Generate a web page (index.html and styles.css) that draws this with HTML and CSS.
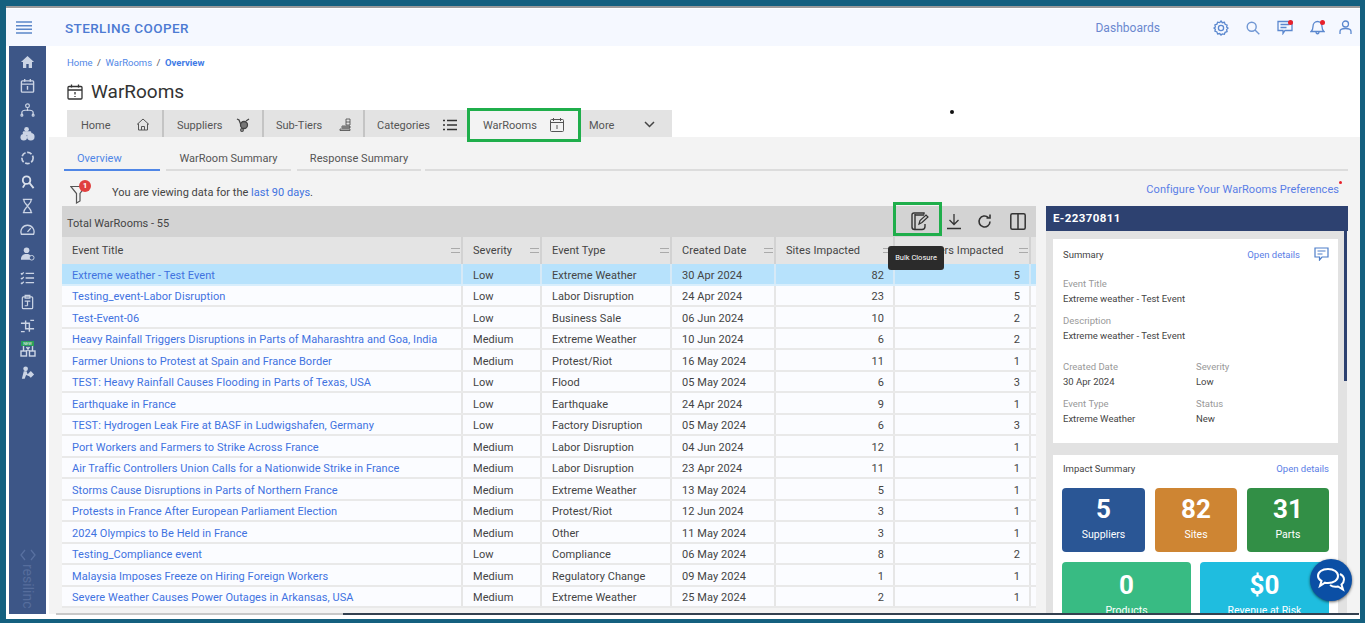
FILE: index.html
```html
<!DOCTYPE html>
<html lang="en">
<head>
<meta charset="utf-8">
<title>WarRooms</title>
<link rel="stylesheet" href="styles.css">
</head>
<body>
<div class="screen">
  <header class="topbar">
    <div class="burger"><svg width="16" height="14" viewBox="0 0 16 14"><path d="M0 1h16M0 4.700h16M0 8.300h16M0 12h16" stroke="#5b86c9" stroke-width="1.500"/></svg></div>
    <div class="brand">STERLING COOPER</div>
    <div class="topnav">
      <span class="dash">Dashboards</span>
      <span class="topicons">
        <svg width="16" height="16" viewBox="0 0 16 16" fill="none" stroke="#5b88cf" stroke-width="1.300"><path d="M8 1l1.300 1.700 2.100-.4.700 2 2 .8-.5 2 1.400 1-1.400 1.500.5 2-2 .7-.7 2-2.100-.4L8 15l-1.300-1.500-2.100.4-.7-2-2-.7.500-2L1 8l1.400-1-.5-2 2-.8.700-2 2.100.4z"/><circle cx="8" cy="8" r="2.600"/></svg>
        <svg width="14" height="14" viewBox="0 0 14 14" fill="none" stroke="#7097d4" stroke-width="1.400"><circle cx="5.700" cy="5.700" r="4.500"/><path d="M9 9l4.300 4.300"/></svg>
        <span class="dotted"><svg width="16" height="15" viewBox="0 0 16 15" fill="none" stroke="#5b88cf" stroke-width="1.300"><path d="M1 1.500h14v9H8l-2 3v-3H1zM3.500 4.500h9M3.500 7.500h6"/></svg><i class="reddot"></i></span>
        <span class="dotted"><svg width="15" height="15" viewBox="0 0 15 15" fill="none" stroke="#5b88cf" stroke-width="1.300"><path d="M1 11.500c1.500-1 2-2 2-5s2-5 4.500-5 4.500 2 4.500 5 .5 4 2 5zM6 11.500c0 3 3 3 3 0"/></svg><i class="reddot"></i></span>
        <svg class="usericon" width="13" height="15" viewBox="0 0 13 15" fill="none" stroke="#5b88cf" stroke-width="1.300"><circle cx="6.500" cy="4" r="3"/><path d="M1 14v-2.500C1 9.500 3 8.500 6.500 8.500s5.500 1 5.500 3V14"/></svg>
      </span>
    </div>
  </header>

  <div class="shell">
    <nav class="sidebar">
      <svg class="sico" viewBox="0 0 16 16"><path d="M8 1.500L1 8h2.200v6.500h3.500V10h2.600v4.500h3.500V8H15z" fill="#dfe6f2"/></svg>
      <svg class="sico" viewBox="0 0 16 16" fill="none" stroke="#dfe6f2" stroke-width="1.500"><rect x="1.500" y="2.500" width="13" height="12" rx="1"/><path d="M1.500 6h13M5 .5v3M11 .5v3M8 8v4"/></svg>
      <svg class="sico" viewBox="0 0 16 16" fill="none" stroke="#dfe6f2" stroke-width="1.300"><circle cx="8" cy="3.500" r="2"/><path d="M2 13v-2.500C2 9 4 8 8 8s6 1 6 2.500V13M8 6v3"/><circle cx="2" cy="13.500" r="1"/><circle cx="14" cy="13.500" r="1"/></svg>
      <svg class="sico" viewBox="0 0 16 16" fill="#dfe6f2"><circle cx="7" cy="3" r="2.500"/><rect x="3" y="5" width="9" height="4" rx="1"/><circle cx="4" cy="11.500" r="3.500"/><circle cx="11.500" cy="11" r="4"/></svg>
      <svg class="sico" viewBox="0 0 16 16" fill="none" stroke="#dfe6f2" stroke-width="1.800" stroke-dasharray="5 1.800"><circle cx="8" cy="8" r="6"/></svg>
      <svg class="sico" viewBox="0 0 16 16" fill="none" stroke="#eef2f8" stroke-width="2"><circle cx="7" cy="6" r="4"/><path d="M10 9l4.500 5.500M3 14l2.500-4"/></svg>
      <svg class="sico" viewBox="0 0 16 16" fill="none" stroke="#dfe6f2" stroke-width="1.400"><path d="M3 1h10M3 15h10M4 1c0 4 3 5 4 7 1-2 4-3 4-7M4 15c0-4 3-5 4-7 1 2 4 3 4 7z"/></svg>
      <svg class="sico" viewBox="0 0 16 16" fill="none" stroke="#dfe6f2" stroke-width="1.400"><path d="M1.500 12.500a7 7 0 1 1 13 0zM8 10l3.500-4"/></svg>
      <svg class="sico" viewBox="0 0 16 16" fill="#dfe6f2"><circle cx="7" cy="4" r="3"/><path d="M1 14c0-4 2-6 6-6 2 0 3 .5 4 1.500V14z"/><circle cx="12.500" cy="12" r="2.500" fill="#3d5687" stroke="#dfe6f2"/></svg>
      <svg class="sico" viewBox="0 0 16 16" fill="none" stroke="#dfe6f2" stroke-width="1.400"><path d="M6 3h9M6 8h9M6 13h9M1 3l1 1 2-2M1 8l1 1 2-2M1 13l1 1 2-2"/></svg>
      <svg class="sico" viewBox="0 0 16 16" fill="none" stroke="#dfe6f2" stroke-width="1.300"><rect x="2.500" y="2.500" width="11" height="12.500" rx="1"/><path d="M5.500 1h5v3h-5zM5 7h6M8 7v5M5 12h3"/></svg>
      <svg class="sico" viewBox="0 0 16 16" fill="none" stroke="#dfe6f2" stroke-width="1.500"><path d="M1 5h9v9M15 11H6V2M1 14h4M11 2h4"/></svg>
      <span class="newicon"><i class="newtag">NEW</i><svg width="16" height="11" viewBox="0 0 16 11" fill="none" stroke="#dfe6f2" stroke-width="1.400"><rect x="1" y="5" width="5.500" height="5"/><rect x="9.500" y="5" width="5.500" height="5"/><path d="M3.500 0v5M12.500 0v5M6.500 1l3 4M9.500 1l-3 4"/></svg></span>
      <svg class="sico" viewBox="0 0 16 16" fill="#dfe6f2"><circle cx="6" cy="3.500" r="2.500"/><path d="M2 14l2-8h3l1 3 2 1v1.500L6.500 10 5 14z"/><rect x="9" y="7" width="5" height="5" transform="rotate(45 11.500 9.500)"/></svg>
      <div class="sidelogo"><svg width="16" height="16" viewBox="0 0 16 16" fill="none" stroke="#5870a0" stroke-width="1.300"><path d="M5 3L1 8l4 5M11 3l4 5-4 5"/></svg><span>resilinc</span></div>
    </nav>

    <main class="main">
      <div class="crumbs"><a>Home</a><span>/</span><a>WarRooms</a><span>/</span><b>Overview</b></div>
      <h1 class="title">
        <svg width="16" height="16" viewBox="0 0 16 16" fill="none" stroke="#333" stroke-width="1.300"><rect x="1" y="2.500" width="14" height="12.500" rx="1"/><path d="M1 6h14M4.500 .5v3M11.500 .5v3M8 8v2.500M8 12v1"/></svg>
        WarRooms
      </h1>
      <div class="tabs">
        <div class="tab t-home"><span>Home</span><svg width="14" height="13" viewBox="0 0 14 13" fill="none" stroke="#555" stroke-width="1"><path d="M1 6.500L7 1l6 5.500M2.500 5.500V12h9V5.500M5.500 12V8.500h3V12"/></svg></div>
        <div class="tab t-sup"><span>Suppliers</span><svg width="14" height="14" viewBox="0 0 14 14" fill="none" stroke="#444" stroke-width="1.300"><path d="M1 1l2 1 2 5M13 1l-3 2"/><circle cx="8" cy="7" r="3.500" fill="#777"/><circle cx="6" cy="12" r="1.300"/></svg></div>
        <div class="tab t-sub"><span>Sub-Tiers</span><svg width="12" height="13" viewBox="0 0 12 13" fill="#444" stroke="#444" stroke-width=".8"><path d="M7 1h4v6H7zM3 8h8v2H3zM1 11h10v1.500H1z" fill="none"/><path d="M7 4h4M4 9h7"/></svg></div>
        <div class="tab t-cat"><span>Categories</span><svg width="14" height="12" viewBox="0 0 14 12" fill="none" stroke="#333" stroke-width="1.500"><path d="M4 1.500h10M4 6h10M4 10.500h10M0 1.500h2M0 6h2M0 10.500h2"/></svg></div>
        <div class="tab t-war"><span>WarRooms</span><svg width="14" height="14" viewBox="0 0 14 14" fill="none" stroke="#555" stroke-width="1"><rect x=".5" y="1.500" width="13" height="12" rx="1"/><path d="M.5 4.500h13M3.500 0v3M10.500 0v3M7 7v4"/></svg></div>
        <div class="tab t-more"><span>More</span><svg width="11" height="7" viewBox="0 0 11 7" fill="none" stroke="#444" stroke-width="1.500"><path d="M1 1l4.500 4.500L10 1"/></svg></div>
      </div>

      <section class="panel">
        <div class="subtabs">
          <div class="st st-over">Overview</div>
          <div class="st st-sum">WarRoom Summary</div>
          <div class="st st-res">Response Summary</div>
          <div class="st st-fill"></div>
        </div>
        <div class="notice">
          <span class="funnel"><svg width="16" height="19" viewBox="0 0 16 19" fill="none" stroke="#555" stroke-width="1.200"><path d="M.8 1.500h14.400L10 8.500v7.500L6.500 18V8.500z"/></svg><i class="fbadge">1</i></span>
          <span class="ntext">You are viewing data for the <a>last 90 days</a>.</span>
          <a class="config">Configure Your WarRooms Preferences<i class="reddot small"></i></a>
        </div>

        <div class="columns">
          <div class="gridwrap">
            <div class="toolbar">
              <span>Total WarRooms - 55</span>
              <div class="tools">
                <span class="bulk"><svg width="20" height="19" viewBox="0 0 20 19" fill="none" stroke="#333" stroke-width="1.400"><path d="M14 2.500V1H4A2 2 0 0 0 2 3v12a2.500 2.500 0 0 0 2.500 2.500H12a3 3 0 0 0 3-3V12"/><path d="M5 2v15M5 3h9"/><path d="M9 12l1-3.500 6-5.500 2 2-6 5.500z" stroke-width="1.200"/></svg></span>
                <svg class="tool t-dl" width="16" height="17" viewBox="0 0 16 17" fill="none" stroke="#333" stroke-width="1.300"><path d="M8 1v10.500M3.500 7L8 11.500 12.500 7M1 15.500h14"/></svg>
                <svg class="tool t-ref" width="15" height="15" viewBox="0 0 15 15" fill="none" stroke="#333" stroke-width="1.600"><path d="M13 7.500a5.500 5.500 0 1 1-1.700-4M13 .5v3.500H9.500"/></svg>
                <svg class="tool t-split" width="16" height="17" viewBox="0 0 16 17" fill="none" stroke="#333" stroke-width="1.500"><rect x=".8" y=".8" width="14.400" height="15.400" rx="1.500"/><path d="M8 1v15"/></svg>
              </div>
            </div>
            <div class="row head">
              <div class="cell">Event Title<i class="cm"></i></div>
              <div class="cell">Severity<i class="cm"></i></div>
              <div class="cell">Event Type<i class="cm"></i></div>
              <div class="cell">Created Date<i class="cm"></i></div>
              <div class="cell">Sites Impacted<i class="cm"></i></div>
              <div class="cell sup">Suppliers Impacted<i class="cm"></i></div>
            </div>
            <div class="row sel"><div class="cell link">Extreme weather - Test Event</div><div class="cell">Low</div><div class="cell">Extreme Weather</div><div class="cell">30 Apr 2024</div><div class="cell num">82</div><div class="cell num">5</div></div>
            <div class="row"><div class="cell link">Testing_event-Labor Disruption</div><div class="cell">Low</div><div class="cell">Labor Disruption</div><div class="cell">24 Apr 2024</div><div class="cell num">23</div><div class="cell num">5</div></div>
            <div class="row"><div class="cell link">Test-Event-06</div><div class="cell">Low</div><div class="cell">Business Sale</div><div class="cell">06 Jun 2024</div><div class="cell num">10</div><div class="cell num">2</div></div>
            <div class="row"><div class="cell link">Heavy Rainfall Triggers Disruptions in Parts of Maharashtra and Goa, India</div><div class="cell">Medium</div><div class="cell">Extreme Weather</div><div class="cell">10 Jun 2024</div><div class="cell num">6</div><div class="cell num">2</div></div>
            <div class="row"><div class="cell link">Farmer Unions to Protest at Spain and France Border</div><div class="cell">Medium</div><div class="cell">Protest/Riot</div><div class="cell">16 May 2024</div><div class="cell num">11</div><div class="cell num">1</div></div>
            <div class="row"><div class="cell link">TEST: Heavy Rainfall Causes Flooding in Parts of Texas, USA</div><div class="cell">Low</div><div class="cell">Flood</div><div class="cell">05 May 2024</div><div class="cell num">6</div><div class="cell num">3</div></div>
            <div class="row"><div class="cell link">Earthquake in France</div><div class="cell">Low</div><div class="cell">Earthquake</div><div class="cell">24 Apr 2024</div><div class="cell num">9</div><div class="cell num">1</div></div>
            <div class="row"><div class="cell link">TEST: Hydrogen Leak Fire at BASF in Ludwigshafen, Germany</div><div class="cell">Low</div><div class="cell">Factory Disruption</div><div class="cell">05 May 2024</div><div class="cell num">6</div><div class="cell num">3</div></div>
            <div class="row"><div class="cell link">Port Workers and Farmers to Strike Across France</div><div class="cell">Medium</div><div class="cell">Labor Disruption</div><div class="cell">04 Jun 2024</div><div class="cell num">12</div><div class="cell num">1</div></div>
            <div class="row"><div class="cell link">Air Traffic Controllers Union Calls for a Nationwide Strike in France</div><div class="cell">Medium</div><div class="cell">Labor Disruption</div><div class="cell">23 Apr 2024</div><div class="cell num">11</div><div class="cell num">1</div></div>
            <div class="row"><div class="cell link">Storms Cause Disruptions in Parts of Northern France</div><div class="cell">Medium</div><div class="cell">Extreme Weather</div><div class="cell">13 May 2024</div><div class="cell num">5</div><div class="cell num">1</div></div>
            <div class="row"><div class="cell link">Protests in France After European Parliament Election</div><div class="cell">Medium</div><div class="cell">Protest/Riot</div><div class="cell">12 Jun 2024</div><div class="cell num">3</div><div class="cell num">1</div></div>
            <div class="row"><div class="cell link">2024 Olympics to Be Held in France</div><div class="cell">Medium</div><div class="cell">Other</div><div class="cell">11 May 2024</div><div class="cell num">3</div><div class="cell num">1</div></div>
            <div class="row"><div class="cell link">Testing_Compliance event</div><div class="cell">Low</div><div class="cell">Compliance</div><div class="cell">06 May 2024</div><div class="cell num">8</div><div class="cell num">2</div></div>
            <div class="row"><div class="cell link">Malaysia Imposes Freeze on Hiring Foreign Workers</div><div class="cell">Medium</div><div class="cell">Regulatory Change</div><div class="cell">09 May 2024</div><div class="cell num">1</div><div class="cell num">1</div></div>
            <div class="row"><div class="cell link">Severe Weather Causes Power Outages in Arkansas, USA</div><div class="cell">Medium</div><div class="cell">Extreme Weather</div><div class="cell">25 May 2024</div><div class="cell num">2</div><div class="cell num">1</div></div>
            <div class="greenbox"></div>
            <div class="tooltip">Bulk Closure</div>
          </div>

          <aside class="side">
            <div class="sidehead">E-22370811</div>
            <div class="sidebody">
              <div class="card c-sum">
                <div class="cardhead"><span>Summary</span><span class="cardlink">Open details<svg width="15" height="14" viewBox="0 0 15 14" fill="none" stroke="#4f7fc9" stroke-width="1.200"><path d="M1 1h13v9H8l-2.500 3v-3H1zM3.500 4h8M3.500 7h5"/></svg></span></div>
                <div class="field"><label>Event Title</label><p>Extreme weather - Test Event</p></div>
                <div class="field"><label>Description</label><p>Extreme weather - Test Event</p></div>
                <div class="pairs">
                  <div class="field"><label>Created Date</label><p>30 Apr 2024</p></div>
                  <div class="field"><label>Severity</label><p>Low</p></div>
                  <div class="field"><label>Event Type</label><p>Extreme Weather</p></div>
                  <div class="field"><label>Status</label><p>New</p></div>
                </div>
              </div>
              <div class="card c-imp">
                <div class="cardhead"><span>Impact Summary</span><span class="cardlink">Open details</span></div>
                <div class="stats3">
                  <div class="stat s-blue"><b>5</b><span>Suppliers</span></div>
                  <div class="stat s-orange"><b>82</b><span>Sites</span></div>
                  <div class="stat s-green"><b>31</b><span>Parts</span></div>
                </div>
                <div class="stats2">
                  <div class="stat s-mint"><b>0</b><span>Products</span></div>
                  <div class="stat s-cyan"><b>$0</b><span>Revenue at Risk</span></div>
                </div>
              </div>
            </div>
          </aside>
        </div>
      </section>
    </main>
  </div>
  <div class="scrollline"></div>
  <div class="sidethumb"></div>
  <div class="stray"></div>
  <button class="chat"><svg width="30" height="26" viewBox="0 0 30 26" fill="none" stroke="#fff" stroke-width="2"><path d="M12 2c6 0 10 3 10 7s-4 7-10 7c-1 0-2 0-3-.3L4 19l1.500-5C3 12.700 2 11 2 9c0-4 4-7 10-7z"/><path d="M24 7c2.500 1.200 4 3.200 4 5.500 0 2-1 3.700-2.500 5l1.500 5-5-3c-3 .7-6 0-8-1.500"/></svg></button>
</div>
</body>
</html>
```
FILE: styles.css
```css
* { box-sizing: border-box; }
html, body { margin: 0; height: 100%; overflow: hidden; }
body { background: #14607f; font-family: Roboto, "Liberation Sans", sans-serif; color: #444; }
i { font-style: normal; }
a { color: #3f72df; }

.screen {
  position: relative;
  margin: 6px 5px 0 6px;
  height: 613px;
  background: #fff;
  border-top: 2px solid #9a9a9a;
  padding: 1px 0 5px 3px;
  overflow: hidden;
  display: flex;
  flex-direction: column;
}

.topbar { height: 37px; flex: none; background: #f5f8ff; display: flex; align-items: center; margin-left: -3px; padding-left: 10px; padding-right: 0; }
.burger { width: 49px; display: flex; padding-top: 1px; }
.brand { font-size: 13.500px; font-weight: 500; color: #4d7bd3; letter-spacing: .4px; margin-top: 1px; }
.topnav { margin-left: auto; display: flex; align-items: center; }
.dash { font-size: 12px; color: #6b88cf; margin-right: 53px; margin-top: 1px; letter-spacing: .03px; }
.topicons { display: flex; align-items: center; gap: 17px; margin-right: 8px; }
.usericon { margin-left: -3px; }
.dotted { position: relative; display: flex; }
.reddot { position: absolute; width: 5px; height: 5px; border-radius: 50%; background: #e8202a; right: 0; top: 0; }
.reddot.small { width: 3px; height: 3px; right: -3px; top: -2px; }

.shell { flex: 1; display: flex; min-height: 0; }
.sidebar { width: 37px; flex: none; background: #3d5687; display: flex; flex-direction: column; align-items: center; padding-top: 8px; gap: 8px; position: relative; }
.sico { width: 15px; height: 16px; flex: none; opacity: .88; }
.newicon { display: flex; flex-direction: column; align-items: center; height: 16px; margin-top: -1px; opacity: .9; }
.newtag { background: #27a855; color: #fff; font-size: 4px; line-height: 5px; padding: 0 2px; height: 5px; }
.sidelogo { position: absolute; left: 11px; bottom: 5px; display: flex; flex-direction: column; align-items: center; gap: 1px; }
.sidelogo span { writing-mode: vertical-rl; font-size: 14px; color: #566d9c; }

.main { flex: 1; min-width: 0; display: flex; flex-direction: column; }
.crumbs { font-size: 9.500px; color: #555; padding: 11px 0 0 21px; height: 24px; white-space: nowrap; display: flex; gap: 4.500px; }
.crumbs a { color: #4f86e6; }
.crumbs b { color: #3f7be6; font-weight: 700; }
.title { margin: 0; height: 40px; padding: 9px 0 0 21px; font-size: 19px; font-weight: 400; color: #333; display: flex; align-items: flex-start; gap: 8px; line-height: 26px; }
.title svg { margin-top: 5px; }

.tabs { height: 27px; flex: none; display: flex; margin-left: 21px; position: relative; z-index: 2; }
.tab { height: 27px; background: #e3e3e3; font-size: 11px; color: #555; display: flex; align-items: center; justify-content: space-between; border-right: 2px solid #c4c4c4; padding: 0 12px 0 14px; white-space: nowrap; }
.tab span { padding-top: 3px; }
.tab svg { margin-top: 2px; }
.t-home { width: 97px; }
.t-sup { width: 100px; padding-left: 13px; }
.t-sub { width: 101px; padding-left: 12px; }
.t-cat { width: 102px; border-right: 0; padding-left: 12px; padding-right: 10px; }
.t-war { width: 114px; height: 34px; margin-top: -2px; background: #f3f3f3; border: 3px solid #1fae4b; padding: 0 14px 0 13px; }
.t-war span { padding-top: 0; }
.t-war svg { margin-top: 0; }
.t-more { width: 91px; border-right: 0; padding: 0 17px 0 8px; }

.panel { flex: 1; min-height: 0; background: #f3f3f3; margin-left: 3px; padding: 0 12px 0 13px; overflow: hidden; }
.subtabs { display: flex; gap: 6px; height: 34px; padding: 12px 0 0 2px; }
.st { height: 22px; font-size: 11px; color: #555; text-align: center; border-bottom: 2px solid #dcdcdc; line-height: 20px; letter-spacing: .02px; }
.st-over { width: 96px; color: #4f86e6; border-bottom-color: #4f86e6; text-align: left; padding-left: 13px; }
.st-sum { width: 125px; }
.st-res { width: 124px; }
.st-fill { flex: 1; margin-left: -2px; }

.notice { display: flex; align-items: flex-start; height: 35px; position: relative; font-size: 11px; padding-top: 3px; }
.funnel { position: relative; margin: 11px 0 0 8px; width: 42px; display: block; height: 19px; }
.fbadge { position: absolute; left: 9px; top: -5px; width: 12px; height: 12px; border-radius: 50%; background: #e0403f; color: #fff; font-size: 8px; line-height: 12px; text-align: center; font-weight: 700; }
.ntext { margin-top: 12px; letter-spacing: .02px; }
.config { margin-left: auto; margin-right: 9px; margin-top: 9px; color: #5a7ee6; position: relative; letter-spacing: .05px; }

.columns { display: flex; gap: 10px; align-items: flex-start; }
.gridwrap { width: 974px; flex: none; position: relative; }
.toolbar { height: 31px; background: #d3d3d3; display: flex; align-items: center; justify-content: space-between; font-size: 11px; padding: 3px 0 0 5px; color: #444; }
.tools { display: flex; align-items: center; height: 28px; padding-right: 10px; margin-top: -3px; }
.bulk { display: flex; margin-right: 16px; }
.tool { flex: none; }
.t-ref { margin-left: 15px; }
.t-split { margin-left: 18px; }

.row { display: grid; grid-template-columns: 401px 79px 130px 104px 119px 1fr; height: 21.500px; background: #fbfcff; border-bottom: 2px solid #e9e9e9; font-size: 11px; }
.row.head { height: 27px; background: #e4e4e4; border-bottom: 0; color: #444; }
.row.sel { background: #b7e2fc; border-bottom-color: #d8eefc; }
.cell { display: flex; align-items: center; padding: 3px 8px 0 10px; border-right: 2px solid #e6e6e6; white-space: nowrap; overflow: hidden; position: relative; letter-spacing: .06px; }
.sel .cell { border-right-color: #d6e9f6; }
.head .cell { border-right-color: #d2d2d2; padding-top: 0; }
.cell:last-child { margin-right: 5px; }
.link { color: #3f72df; }
.num { justify-content: flex-end; padding-right: 9px; }
.sup { padding-left: 13px; }
.cm { position: absolute; right: 1px; top: 11px; width: 9px; height: 5px; border-top: 1px solid #aaa; border-bottom: 1px solid #aaa; }
.greenbox { position: absolute; left: 831px; top: -4px; width: 49px; height: 34px; border: 3px solid #1fae4b; }
.tooltip { position: absolute; left: 826px; top: 40px; width: 56px; height: 24px; background: #2b2b2b; color: #fff; border-radius: 3px; font-size: 7.500px; text-align: center; line-height: 24px; }

.side { width: 302px; flex: none; }
.sidehead { height: 25px; background: #2d4170; color: #fff; font-size: 11.500px; font-weight: 700; padding: 0 0 0 7px; line-height: 25px; letter-spacing: .4px; }
.sidebody { background: #e2e2e2; padding: 8px 9px 0 7px; margin-right: 1px; }
.card { background: #fff; padding: 8px 9px 0 10px; }
.c-sum { height: 204px; margin-bottom: 12px; }
.c-imp { height: 200px; padding-top: 6px; }
.cardhead { display: flex; justify-content: space-between; align-items: center; font-size: 9.500px; color: #444; height: 14px; }
.cardlink { color: #5a7ee6; display: flex; align-items: center; gap: 14px; font-size: 9.500px; }
.field { margin-top: 10px; }
.cardhead + .field { margin-top: 17px; }
.field label { display: block; font-size: 9.500px; color: #999; line-height: 12px; }
.field p { margin: 3px 0 0; font-size: 9.500px; color: #444; line-height: 12px; }
.pairs { display: grid; grid-template-columns: 133px 1fr; }
.pairs .field { margin-top: 19px; }
.pairs .field:nth-child(n+3) { margin-top: 9.500px; }
.stats3 { display: grid; grid-template-columns: 83px 82px 82px; gap: 10px; margin: 13px 0 0 -1px; }
.stats2 { display: grid; grid-template-columns: 129px 129px; gap: 9px; margin: 10px 0 0 -1px; }
.stat { height: 64px; border-radius: 4px; color: #fff; display: flex; flex-direction: column; align-items: center; padding-top: 6px; }
.stats2 .stat { padding-top: 8px; }
.stat b { font-size: 26px; line-height: 30px; font-weight: 700; }
.stat span { font-size: 10.500px; line-height: 16px; margin-top: 3px; }
.s-blue { background: #2a5695; }
.s-orange { background: #ce8533; }
.s-green { background: #328f46; }
.s-mint { background: #38bb83; }
.s-cyan { background: #1fbddf; }

.scrollline { position: absolute; left: 50px; bottom: 4px; right: 1px; height: 2px; background: linear-gradient(90deg, #c8c8c8 287px, #33404f 287px); }
.sidethumb { position: absolute; left: 1338px; top: 223px; width: 3px; height: 150px; background: #2d4170; }
.stray { position: absolute; left: 944px; top: 102px; width: 4px; height: 4px; border-radius: 50%; background: #111; }
.chat { position: absolute; left: 1304px; top: 551px; width: 42px; height: 42px; border-radius: 50%; border: 0; background: #0b4fa5; box-shadow: 0 1px 3px rgba(0,0,0,.6); display: flex; align-items: center; justify-content: center; padding: 0; }
```
